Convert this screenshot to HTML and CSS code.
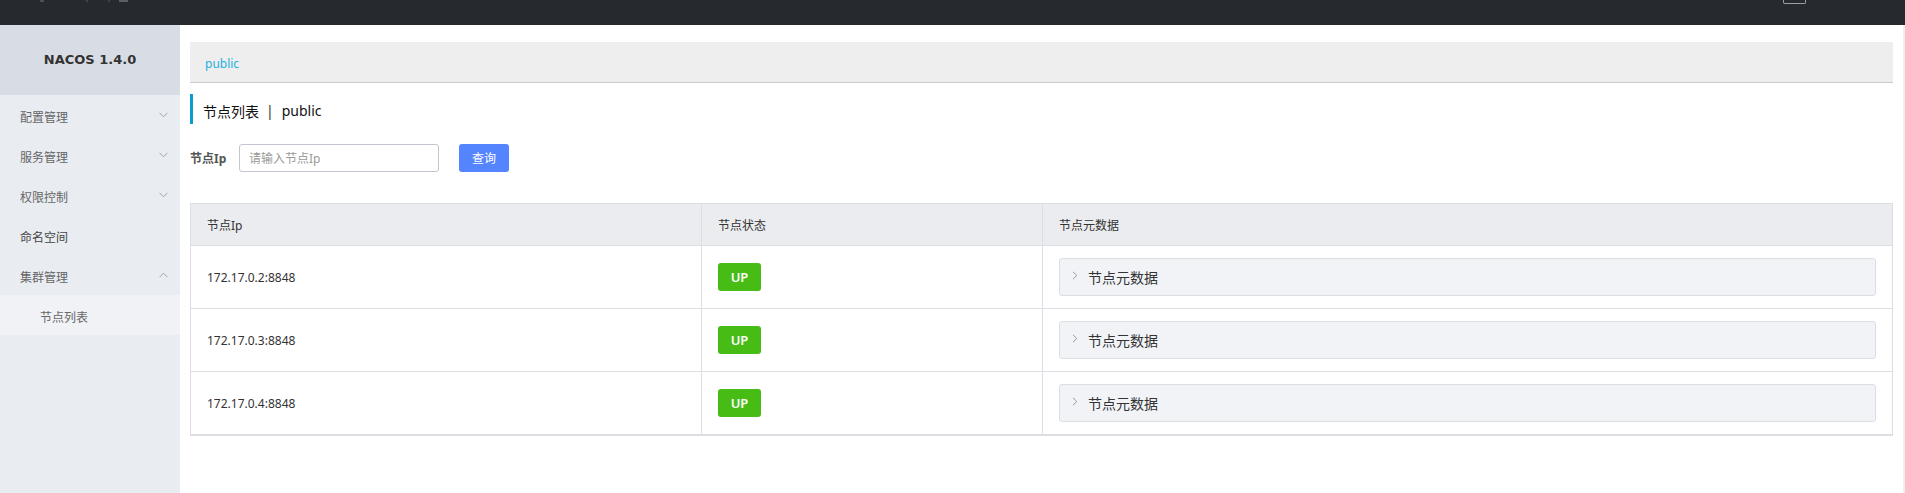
FILE: index.html
```html
<!DOCTYPE html>
<html lang="zh">
<head>
<meta charset="utf-8">
<title>Nacos</title>
<link rel="stylesheet" href="styles.css">
</head>
<body>
<header class="topbar">
  <div class="top-left">
    <span class="tb-bit b1"></span><span class="tb-bit b2"></span><span class="tb-bit b3"></span><span class="tb-bit b4"></span>
  </div>
  <div class="top-right"><span class="tb-box"></span></div>
</header>
<div class="layout">
  <aside class="sidebar">
    <div class="brand">NACOS 1.4.0</div>
    <ul class="menu">
      <li class="menu-item"><span>配置管理</span><svg class="chev" width="9" height="6" viewBox="0 0 9 6"><polyline points="0.5,0.8 4.5,4.8 8.5,0.8" fill="none" stroke="#a0a4ad" stroke-width="1"/></svg></li>
      <li class="menu-item"><span>服务管理</span><svg class="chev" width="9" height="6" viewBox="0 0 9 6"><polyline points="0.5,0.8 4.5,4.8 8.5,0.8" fill="none" stroke="#a0a4ad" stroke-width="1"/></svg></li>
      <li class="menu-item"><span>权限控制</span><svg class="chev" width="9" height="6" viewBox="0 0 9 6"><polyline points="0.5,0.8 4.5,4.8 8.5,0.8" fill="none" stroke="#a0a4ad" stroke-width="1"/></svg></li>
      <li class="menu-item dark"><span>命名空间</span></li>
      <li class="menu-item"><span>集群管理</span><svg class="chev" width="9" height="6" viewBox="0 0 9 6"><polyline points="0.5,5.2 4.5,1.2 8.5,5.2" fill="none" stroke="#a0a4ad" stroke-width="1"/></svg></li>
      <li class="sub-item"><span>节点列表</span></li>
    </ul>
  </aside>
  <main class="main">
    <div class="crumb"><span class="crumb-link">public</span></div>
    <div class="page-title"><span>节点列表</span><span class="sep">|</span><span>public</span></div>
    <div class="search">
      <label class="search-label">节点Ip</label>
      <div class="input"><span class="ph">请输入节点Ip</span></div>
      <button class="btn">查询</button>
    </div>
    <div class="table">
      <div class="tr th">
        <div class="cell c1">节点Ip</div>
        <div class="cell c2">节点状态</div>
        <div class="cell c3">节点元数据</div>
      </div>
      <div class="tr">
        <div class="cell c1">172.17.0.2:8848</div>
        <div class="cell c2"><span class="tag">UP</span></div>
        <div class="cell c3"><div class="panel"><svg class="arrow" width="6" height="9" viewBox="0 0 6 9"><polyline points="1,0.8 4.8,4.5 1,8.2" fill="none" stroke="#999" stroke-width="1"/></svg><span>节点元数据</span></div></div>
      </div>
      <div class="tr">
        <div class="cell c1">172.17.0.3:8848</div>
        <div class="cell c2"><span class="tag">UP</span></div>
        <div class="cell c3"><div class="panel"><svg class="arrow" width="6" height="9" viewBox="0 0 6 9"><polyline points="1,0.8 4.8,4.5 1,8.2" fill="none" stroke="#999" stroke-width="1"/></svg><span>节点元数据</span></div></div>
      </div>
      <div class="tr">
        <div class="cell c1">172.17.0.4:8848</div>
        <div class="cell c2"><span class="tag">UP</span></div>
        <div class="cell c3"><div class="panel"><svg class="arrow" width="6" height="9" viewBox="0 0 6 9"><polyline points="1,0.8 4.8,4.5 1,8.2" fill="none" stroke="#999" stroke-width="1"/></svg><span>节点元数据</span></div></div>
      </div>
    </div>
  </main>
</div>
</body>
</html>
```

FILE: styles.css
```css
* { box-sizing: border-box; }
html, body { margin: 0; padding: 0; }
body {
  font-family: "Noto Sans", "Noto Sans CJK SC", sans-serif;
  font-size: 12px;
  color: #333;
  background: #fff;
  height: 493px;
  overflow: hidden;
}
.topbar {
  height: 25px;
  background: #262a2f;
  display: flex;
  justify-content: space-between;
  align-items: flex-start;
}
.top-left { display: flex; align-items: flex-start; }
.tb-bit { display: block; height: 2px; background: #4a5058; }
.b1 { width: 4px; margin-left: 40px; }
.b2 { width: 2px; margin-left: 42px; background: #2f4a55; }
.b3 { width: 2px; margin-left: 20px; background: #2f4a55; }
.b4 { width: 9px; margin-left: 9px; background: #5a6068; }
.top-right { padding-right: 99px; }
.tb-box {
  display: block;
  width: 23px;
  height: 4px;
  border: 1px solid #9aa0a6;
  border-top: none;
  border-radius: 0 0 2px 2px;
}
.layout { display: flex; height: 468px; }
.sidebar {
  width: 180px;
  flex: none;
  background: #e9ecf1;
}
.brand {
  height: 70px;
  background: #d8dde5;
  display: flex;
  align-items: center;
  justify-content: center;
  font-family: "DejaVu Sans", sans-serif;
  font-weight: bold;
  font-size: 13px;
  color: #333;
  padding-bottom: 1px;
}
.menu { list-style: none; margin: 0; padding: 0; }
.menu-item {
  height: 40px;
  display: flex;
  align-items: center;
  justify-content: space-between;
  padding: 3px 12px 0 20px;
  color: #666;
  font-size: 12px;
}
.menu-item.dark { color: #444; }
.chev { margin-top: -4px; }
.sub-item {
  height: 40px;
  display: flex;
  align-items: center;
  padding: 3px 0 0 40px;
  background: #f0f2f6;
  color: #666;
}
.main {
  flex: 1;
  padding: 17px 10px 0 10px;
  border-right: 2px solid #eeeff2;
}
.crumb {
  height: 41px;
  background: #eeeeee;
  border-bottom: 1px solid #cccccc;
  display: flex;
  align-items: center;
  padding: 2px 0 0 15px;
}
.crumb-link { color: #1fb0dc; font-size: 12px; }
.page-title {
  margin-top: 11px;
  height: 30px;
  border-left: 3px solid #0a9bd1;
  display: flex;
  align-items: center;
  padding: 3px 0 0 10px;
  font-size: 14px;
  color: #111;
}
.sep { margin: 0 8px 0 7px; color: #333; }
.search {
  margin-top: 20px;
  height: 28px;
  display: flex;
  align-items: center;
}
.search-label {
  font-weight: bold;
  font-size: 12px;
  color: #555;
  width: 49px;
}
.input {
  width: 200px;
  height: 28px;
  border: 1px solid #c4c6cf;
  border-radius: 3px;
  display: flex;
  align-items: center;
  padding-left: 9px;
}
.ph { color: #999; font-size: 12px; }
.btn {
  margin-left: 20px;
  width: 50px;
  height: 28px;
  border: none;
  border-radius: 3px;
  background: #5584ff;
  color: #fff;
  font-family: "Noto Sans", "Noto Sans CJK SC", sans-serif;
  font-size: 12px;
  padding: 0;
}
.table {
  margin-top: 31px;
  border: 1px solid #dcdee3;
  border-bottom-width: 2px;
}
.tr {
  display: flex;
  height: 63px;
  border-top: 1px solid #dcdee3;
}
.tr.th {
  height: 41px;
  border-top: none;
  background: #ebecf0;
}
.cell {
  display: flex;
  align-items: center;
  padding: 0 16px;
  font-size: 12px;
  color: #333;
}
.th .cell { color: #333; }
.c1 { width: 510px; flex: none; }
.c2 { width: 341px; flex: none; border-left: 1px solid #dcdee3; }
.c3 { flex: 1; border-left: 1px solid #dcdee3; padding-right: 16px; }
.tag {
  display: flex;
  align-items: center;
  justify-content: center;
  width: 43px;
  height: 28px;
  background: #46bc15;
  border-radius: 3px;
  color: #fff;
  font-weight: 600;
  font-size: 13px;
}
.panel {
  flex: 1;
  height: 38px;
  background: #f2f3f7;
  border: 1px solid #dcdee3;
  border-radius: 3px;
  display: flex;
  align-items: center;
  padding-left: 12px;
  font-size: 14px;
  color: #333;
}
.arrow { margin-right: 10px; margin-top: -3px; }
```
